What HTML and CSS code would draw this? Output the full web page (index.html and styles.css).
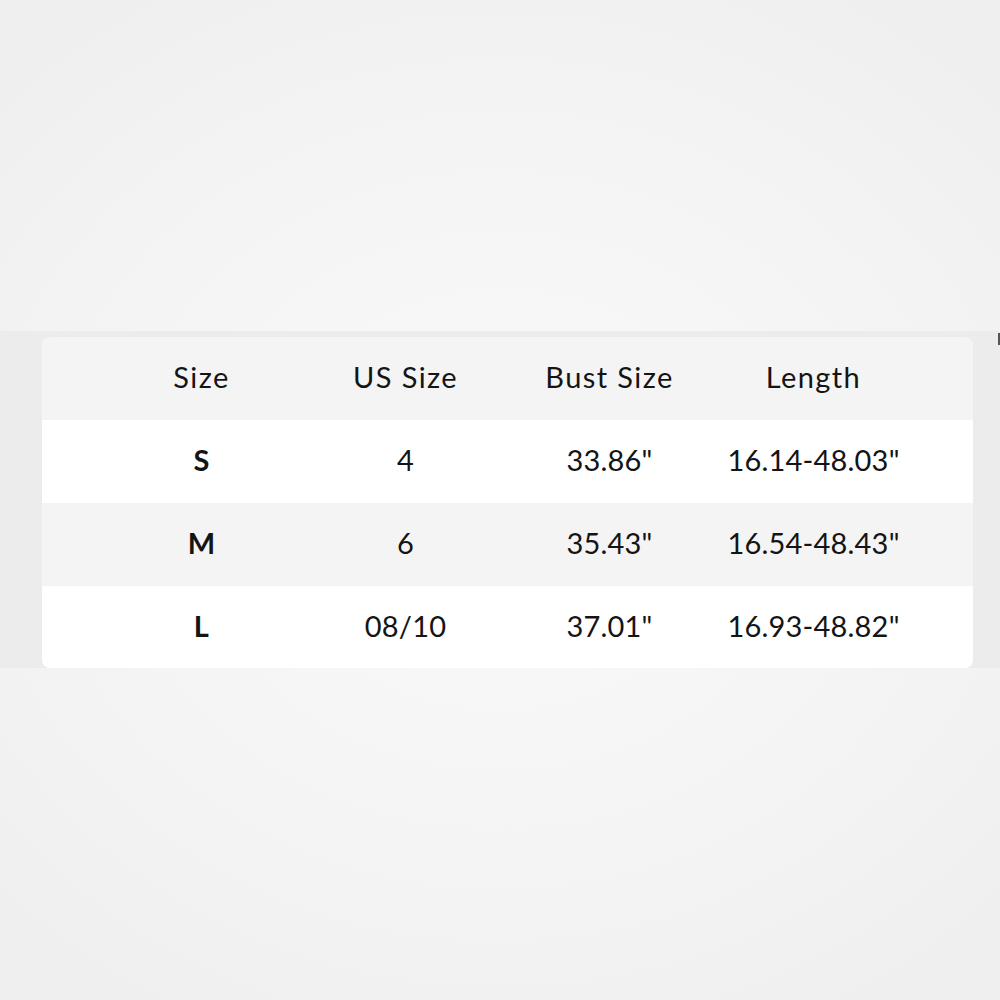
FILE: index.html
```html
<!DOCTYPE html>
<html>
<head>
<meta charset="utf-8">
<link rel="stylesheet" href="styles.css">
</head>
<body>
<div class="page">
  <div class="top"></div>
  <div class="band">
    <div class="card">
      <div class="row head">
        <div class="cell">Size</div>
        <div class="cell">US Size</div>
        <div class="cell">Bust Size</div>
        <div class="cell">Length</div>
      </div>
      <div class="row white">
        <div class="cell b">S</div>
        <div class="cell">4</div>
        <div class="cell">33.86"</div>
        <div class="cell">16.14-48.03"</div>
      </div>
      <div class="row grey">
        <div class="cell b">M</div>
        <div class="cell">6</div>
        <div class="cell">35.43"</div>
        <div class="cell">16.54-48.43"</div>
      </div>
      <div class="row white last">
        <div class="cell b">L</div>
        <div class="cell">08/10</div>
        <div class="cell">37.01"</div>
        <div class="cell">16.93-48.82"</div>
      </div>
    </div>
    <div class="mark"></div>
  </div>
</div>
</body>
</html>
```
FILE: styles.css
```css
html, body {
  margin: 0;
  padding: 0;
}
body {
  width: 1000px;
  height: 1000px;
  overflow: hidden;
  background: radial-gradient(ellipse 700px 600px at 500px 500px, #fafafa 0%, #f3f3f3 70%, #efefef 100%);
  font-family: Lato, "Open Sans", sans-serif;
  color: #141414;
}
.page {
  display: flex;
  flex-direction: column;
}
.top {
  height: 331px;
}
.band {
  position: relative;
  background: #ececec;
  padding: 6px 27px 0 42px;
  height: 331px;
}
.card {
  border-radius: 8px;
  overflow: hidden;
  height: 331px;
}
.row {
  display: grid;
  grid-template-columns: repeat(4, 204px);
  justify-content: center;
  align-items: center;
  height: 83px;
  font-size: 29px;
}
.row.last {
  height: 82px;
}
.head, .grey {
  background: #f4f4f4;
}
.white {
  background: #ffffff;
}
.cell {
  text-align: center;
  letter-spacing: 0.2px;
  padding-bottom: 4px;
}
.head .cell {
  letter-spacing: 1.4px;
}
.b {
  font-weight: 700;
}
.mark {
  position: absolute;
  right: 0;
  top: 2px;
  width: 2px;
  height: 12px;
  background: #555;
}
```
